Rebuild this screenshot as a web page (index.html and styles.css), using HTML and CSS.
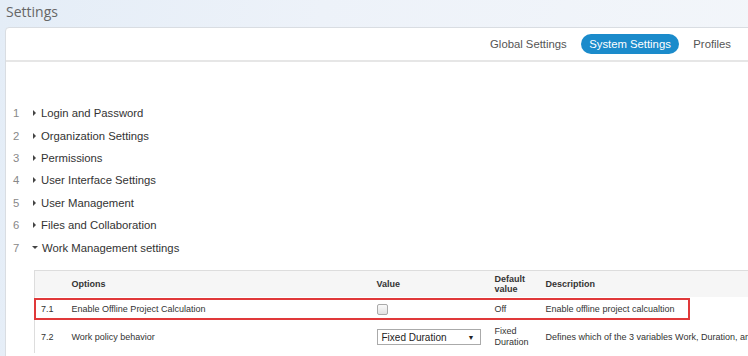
FILE: index.html
```html
<!DOCTYPE html>
<html lang="en">
<head>
    <meta charset="utf-8">
    <title>Settings</title>
    <link rel="stylesheet" href="styles.css">
</head>
<body>
    <h1 class="page-title">Settings</h1>

    <div class="panel">
        <div class="tabs">
            <a class="tab">Global Settings</a>
            <a class="tab active">System Settings</a>
            <a class="tab">Profiles</a>
        </div>

        <ol class="sections">
            <li class="section"><span class="num">1</span><span class="caret right"></span>Login and Password</li>
            <li class="section"><span class="num">2</span><span class="caret right"></span>Organization Settings</li>
            <li class="section"><span class="num">3</span><span class="caret right"></span>Permissions</li>
            <li class="section"><span class="num">4</span><span class="caret right"></span>User Interface Settings</li>
            <li class="section"><span class="num">5</span><span class="caret right"></span>User Management</li>
            <li class="section"><span class="num">6</span><span class="caret right"></span>Files and Collaboration</li>
            <li class="section open"><span class="num">7</span><span class="caret down"></span>Work Management settings</li>
        </ol>

        <div class="table-wrap">
            <table class="options">
                <thead>
                    <tr>
                        <th class="col-num"></th>
                        <th class="col-opt">Options</th>
                        <th class="col-val">Value</th>
                        <th class="col-def">Default<br>value</th>
                        <th class="col-desc">Description</th>
                    </tr>
                </thead>
                <tbody>
                    <tr class="row-short">
                        <td>7.1</td>
                        <td>Enable Offline Project Calculation</td>
                        <td><span class="checkbox"></span></td>
                        <td>Off</td>
                        <td>Enable offline project calcualtion</td>
                    </tr>
                    <tr class="row-tall">
                        <td>7.2</td>
                        <td>Work policy behavior</td>
                        <td><span class="select">Fixed Duration<span class="arrow">&#9660;</span></span></td>
                        <td>Fixed<br>Duration</td>
                        <td class="nowrap">Defines which of the 3 variables Work, Duration, and Units are fixed</td>
                    </tr>
                </tbody>
            </table>
            <div class="highlight-box"></div>
        </div>
    </div>
</body>
</html>
```

FILE: styles.css
```css
body {
    margin: 0;
    height: 356px;
    overflow: hidden;
    font-family: Arial, "Liberation Sans", sans-serif;
    color: #333;
    background: linear-gradient(100deg, #e4edf7 0%, #edf2f9 40%, #f3f6fa 100%);
}
.page-title {
    margin: 0;
    padding: 2px 0 0 6px;
    height: 25px;
    font-family: "Open Sans", sans-serif;
    font-size: 14px;
    font-weight: normal;
    color: #666;
}
.panel {
    margin-left: 5px;
    margin-right: -20px;
    height: 340px;
    background: #fff;
    border: 1px solid #d9dde2;
    border-radius: 4px 0 0 0;
}
.tabs {
    display: flex;
    justify-content: flex-end;
    align-items: center;
    gap: 6px;
    height: 32px;
    padding-right: 28px;
    border-bottom: 2px solid #e6e6e6;
}
.tab {
    font-size: 11.3px;
    color: #555;
    padding: 4px 8px;
    border-radius: 11px;
}
.tab.active {
    background: #1b8bcb;
    color: #fff;
    padding: 4px 8.5px;
}
.sections {
    list-style: none;
    margin: 40px 0 0 0;
    padding: 0 0 0 7px;
}
.section {
    display: flex;
    align-items: center;
    height: 22.4px;
    font-size: 11.3px;
    color: #333;
}
.num {
    width: 19px;
    color: #888;
}
.caret {
    width: 0;
    height: 0;
}
.caret.right {
    margin-left: 1px;
    border-top: 3px solid transparent;
    border-bottom: 3px solid transparent;
    border-left: 3px solid #444;
    margin-right: 5px;
}
.caret.down {
    border-left: 3px solid transparent;
    border-right: 3px solid transparent;
    border-top: 3px solid #444;
    margin-right: 4px;
}
.table-wrap {
    position: relative;
    margin: 11px 0 0 28px;
}
.options {
    border-collapse: collapse;
    table-layout: fixed;
    font-size: 9px;
    width: 760px;
}
.options th,
.options td {
    box-sizing: border-box;
    padding: 0 0 0 6px;
    text-align: left;
    vertical-align: middle;
}
.options th {
    background: #f6f6f6;
    font-weight: bold;
    color: #333;
    height: 27px;
    border-top: 1px solid #ddd;
    line-height: 10px;
}
.options th:first-child,
.options td:first-child {
    border-left: 1px solid #ddd;
}
.options td {
    color: #333;
    line-height: 11px;
}
.row-short td {
    height: 24px;
}
.row-tall td {
    height: 32px;
}
.col-num { width: 31px; }
.col-opt { width: 305px; }
.col-val { width: 118px; }
.col-def { width: 51px; }
.nowrap { white-space: nowrap; }
.highlight-box {
    position: absolute;
    left: 0;
    top: 28px;
    width: 652px;
    height: 18px;
    border: 2px solid #e0393a;
}
.checkbox {
    display: inline-block;
    width: 9px;
    height: 9px;
    border: 1px solid #aaa;
    border-radius: 2px;
    background: linear-gradient(#fafafa, #e2e2e2);
    vertical-align: middle;
}
.select {
    display: inline-flex;
    box-sizing: border-box;
    justify-content: space-between;
    align-items: center;
    width: 104px;
    height: 16px;
    padding: 0 5px 0 4px;
    border: 1px solid #aaa;
    font-size: 10px;
    color: #222;
}
.arrow {
    font-size: 7px;
}
```
